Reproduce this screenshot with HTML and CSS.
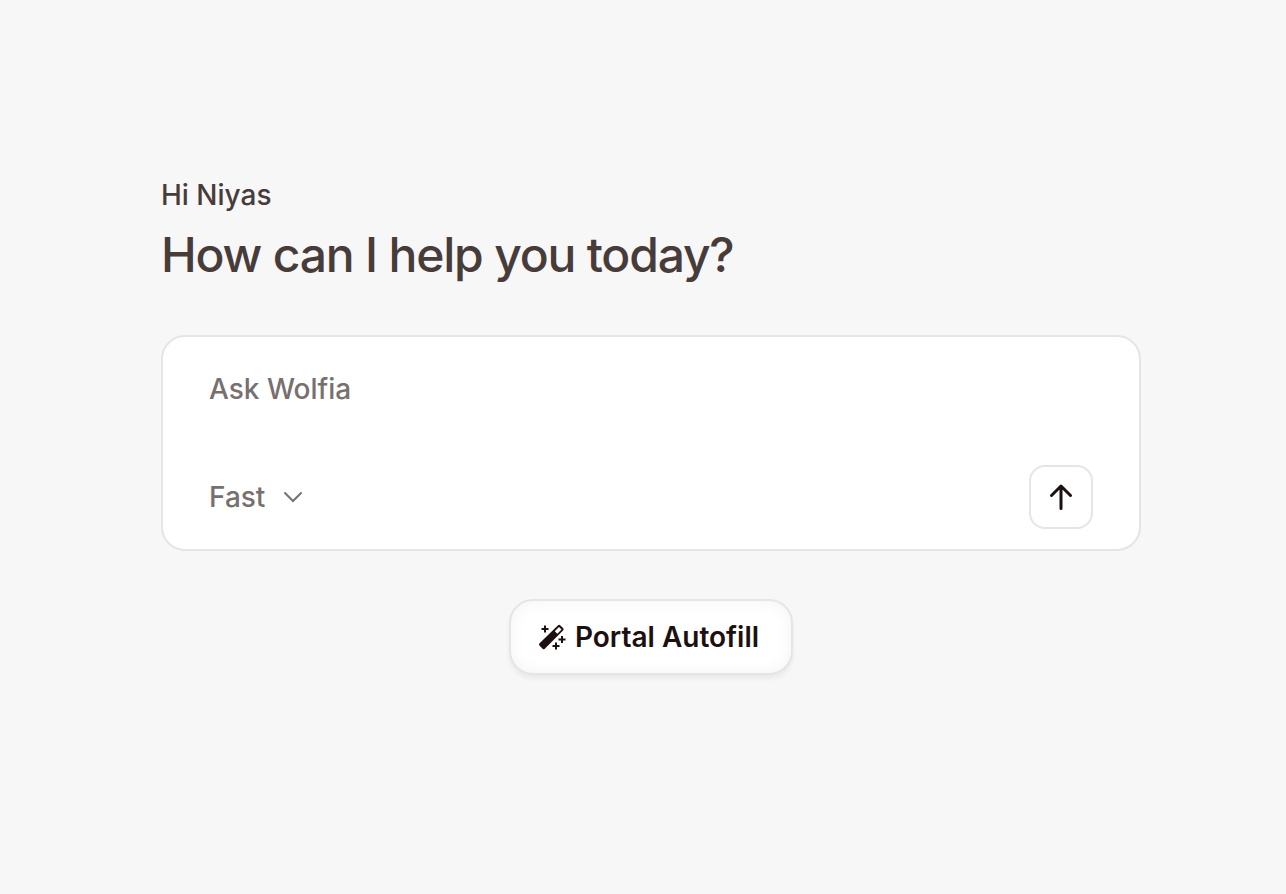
FILE: index.html
```html
<!DOCTYPE html>
<html lang="en">

<head>
    <meta charset="UTF-8">
    <meta name="viewport" content="width=device-width,initial-scale=1">
    <title>Wolfia</title>
    <link rel="stylesheet" href="styles.css">
</head>

<body>
    <main class="home">
        <p class="greeting">Hi Niyas</p>
        <h1 class="title">How can I help you today?</h1>

        <form class="ask-box">
            <input class="ask-input" type="text" placeholder="Ask Wolfia" aria-label="Ask Wolfia">
            <div class="ask-actions">
                <div class="mode">
                    <select class="mode-select" aria-label="Mode">
                        <option>Fast</option>
                    </select>
                    <svg class="mode-arrow" viewBox="0 0 20 12" aria-hidden="true">
                        <path d="M2 2l8 8 8-8" />
                    </svg>
                </div>
                <button class="send" type="submit" aria-label="Send">
                    <svg viewBox="0 0 24 28" aria-hidden="true">
                        <path d="M12 25.500V3M2.500 12.500L12 3l9.500 9.500" />
                    </svg>
                </button>
            </div>
        </form>

        <button class="autofill" type="button">
            <svg viewBox="0 0 28 28" aria-hidden="true">
                <!-- wand -->
                <path fill-rule="evenodd" d="M.6 20.300L18.800 2.400Q20.100 1.200 21.400 2.400L24 5Q25.200 6.300 24 7.600L5.800 25.700Q4.700 26.700 3.600 25.700L.6 22.700Q-.5 21.500 .6 20.300zM15.800 8.200L18.300 10.700 22.500 6.500 20 4z" />
                <!-- sparks -->
                <path d="M5 2.500h2V5h2.500v2H7v2.500H5V7H2.500V5H5zM22 13h2v2.500h2.500v2H24V20h-2v-2.500h-2.500v-2H22zM16 19.500h2V22h2.500v2H18v2.500h-2V24h-2.500v-2H16z" />
            </svg>
            Portal Autofill
        </button>
    </main>
</body>

</html>
```
FILE: styles.css
```css
* {
    box-sizing: border-box;
}

body {
    margin: 0;
    background: #f7f7f7;
    color: #483c3a;
    font-family: Inter, sans-serif;
}

.home {
    display: flex;
    flex-direction: column;
    max-width: 1300px;
    padding: 175px 145px 48px 161px;
}

.greeting {
    margin: 0;
    font-size: 28px;
    font-weight: 500;
    line-height: 40px;
}

.title {
    margin: 8px 0 48px;
    font-size: 48px;
    font-weight: 500;
    line-height: 64px;
    letter-spacing: -0.025em;
}

.ask-box {
    padding: 32px 46px 20px;
    border: 2px solid #e5e5e5;
    border-radius: 24px;
    background: #fff;
}

.ask-input {
    display: block;
    width: 100%;
    height: 40px;
    padding: 0;
    border: 0;
    outline: 0;
    background: none;
    font: 500 28px Inter, sans-serif;
}

.ask-input::placeholder {
    color: #78706f;
    opacity: 1;
}

.ask-actions {
    display: flex;
    align-items: center;
    justify-content: space-between;
    margin-top: 56px;
}

.mode {
    display: flex;
    align-items: center;
    gap: 17px;
}

.mode-select {
    height: 40px;
    padding: 0;
    border: 0;
    appearance: none;
    background: none;
    color: #78706f;
    font: 500 28px Inter, sans-serif;
}

.mode-arrow {
    width: 20px;
    height: 12px;
    fill: none;
    stroke: #78706f;
    stroke-width: 2;
    stroke-linecap: round;
}

.send {
    display: flex;
    align-items: center;
    justify-content: center;
    width: 64px;
    height: 64px;
    padding: 0;
    border: 2px solid #e5e5e5;
    border-radius: 16px;
    background: #fff;
}

.send svg {
    width: 24px;
    height: 28px;
    fill: none;
    stroke: #1c1010;
    stroke-width: 3;
    stroke-linecap: round;
    stroke-linejoin: round;
}

.autofill {
    display: flex;
    align-items: center;
    align-self: center;
    gap: 8px;
    height: 76px;
    margin-top: 48px;
    padding: 0 32px 0 28px;
    border: 2px solid #e5e5e5;
    border-radius: 24px;
    background: #fff;
    box-shadow: 0 4px 4px rgba(0, 0, 0, 0.05), inset 0 0 16px rgba(0, 0, 0, 0.05);
    color: #1c1010;
    font: 600 28px Inter, sans-serif;
}

.autofill svg {
    width: 28px;
    height: 28px;
    fill: #1c1010;
}
```
